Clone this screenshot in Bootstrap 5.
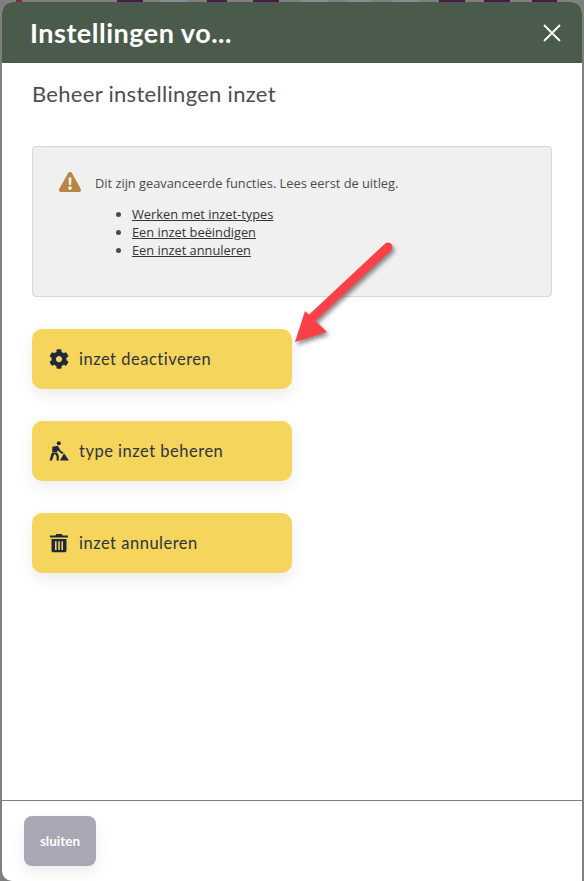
<!DOCTYPE html>
<html lang="nl">
<head>
  <meta charset="UTF-8">
  <meta name="viewport" content="width=device-width, initial-scale=1.0">
  <title>Instellingen</title>
  <link href="https://cdn.jsdelivr.net/npm/bootstrap@5.3.2/dist/css/bootstrap.min.css" rel="stylesheet">
  <style>
    html, body { height: 100%; }
    body {
      background-color: #7f7f7f;
      background-image: linear-gradient(90deg, transparent 16px, #8a2a2a 16px, #8a2a2a 22px, transparent 22px, transparent 117px, #4a1a4a 117px, #4a1a4a 143px, transparent 143px, transparent 160px, #7d8f92 160px, #7d8f92 188px, transparent 188px, transparent 207px, #4a1a4a 207px, #4a1a4a 227px, transparent 227px, transparent 253px, #4a1a4a 253px, #4a1a4a 279px, transparent 279px, transparent 300px, #7d8f92 300px, #7d8f92 328px, transparent 328px, transparent 346px, #7d8f92 346px, #7d8f92 372px, transparent 372px, transparent 393px, #7d8f92 393px, #7d8f92 419px, transparent 419px, transparent 439px, #4a1a4a 439px, #4a1a4a 465px, transparent 465px, transparent 484px, #4a1a4a 484px, #4a1a4a 510px, transparent 510px, transparent 532px, #4a1a4a 532px, #4a1a4a 557px, transparent 557px);
      background-size: 100% 2px;
      background-repeat: no-repeat;
      padding: 2px 2px 0;
      overflow: hidden;
    }
    .sheet { position: relative; height: 879px; background: #fff; border-radius: 10px 10px 0 10px; overflow: hidden; }
    .sheet-head { height: 61px; background: #4a5b4b; padding: 0 10px 0 28px; }
    .sheet-head h1 { font: 700 27px/1 "Lato", sans-serif; color: #fff; margin: 0; letter-spacing: .5px; }
    .sheet-close { width: 40px; height: 40px; padding: 0; background: none; border: 0; }
    .sheet-body { padding: 17px 30px 0; }
    .sheet-body h2 { font: 400 22px/28px "Lato", sans-serif; color: #4d4d4d; margin: 0 0 38px; letter-spacing: .3px; }
    .note-box { height: 151px; background: #f0f0f0; border: 1px solid #cfd9d6; border-radius: 4px; padding: 25px 25px; font: 400 12.8px/18px "Open Sans", sans-serif; color: #4a4a4a; margin-bottom: 32px; }
    .note-box p { margin: 0 0 11px; }
    .note-box ul { margin: 0; padding-left: 74px; }
    .note-box a { color: #333; }
    .warn-icon { width: 24px; height: 22px; margin-right: 13px; flex: none; position: relative; top: -1px; }
    .action-btn { width: 260px; height: 60px; background: #f6d55c; border: 0; border-radius: 10px; padding: 0 0 0 17px; margin-bottom: 32px; font: 400 16.5px/1 "Lato", sans-serif; color: #2f3440; letter-spacing: .5px; box-shadow: 0 6px 16px rgba(0,0,0,.08); }
    .action-btn svg { width: 20px; height: 20px; margin-right: 10px; flex: none; fill: #1e2a3c; }
    .sheet-foot { position: absolute; left: 0; right: 0; bottom: 0; height: 81px; border-top: 1px solid #7f7f7f; padding: 15px 22px; }
    .close-btn { width: 72px; height: 50px; background: #a9a6b6; border: 0; border-radius: 8px; color: #fff; font: 700 13.5px/1 "Lato", sans-serif; box-shadow: 0 6px 16px rgba(0,0,0,.08); padding: 1px 0 0; }
    .red-arrow { position: absolute; left: 280px; top: 228px; width: 120px; height: 120px; overflow: visible; }
  </style>
</head>
<body>
  <div class="sheet d-flex flex-column">
    <div class="sheet-head d-flex align-items-center justify-content-between">
      <h1>Instellingen vo...</h1>
      <button type="button" class="sheet-close d-flex align-items-center justify-content-center" aria-label="sluiten">
        <svg width="20" height="20" viewBox="0 0 20 20"><path d="M2 2l16 16M18 2L2 18" stroke="#fff" stroke-width="1.8" fill="none"/></svg>
      </button>
    </div>
    <div class="sheet-body">
      <h2>Beheer instellingen inzet</h2>
      <div class="note-box">
        <p class="d-flex align-items-center">
          <svg class="warn-icon" viewBox="0 0 24 22"><path fill="#b98545" d="M12 1c-.9 0-1.600.5-2 1.200L1.200 18c-.8 1.400.2 3 1.800 3h18c1.600 0 2.600-1.600 1.800-3L14 2.200C13.600 1.500 12.900 1 12 1z"/><path fill="#f0f0f0" d="M10.500 6.500h3l-.4 7.500h-2.200zM12 15.200a1.900 1.900 0 1 1 0 3.800 1.900 1.900 0 0 1 0-3.800z"/></svg>
          Dit zijn geavanceerde functies. Lees eerst de uitleg.
        </p>
        <ul>
          <li><a href="#">Werken met inzet-types</a></li>
          <li><a href="#">Een inzet beëindigen</a></li>
          <li><a href="#">Een inzet annuleren</a></li>
        </ul>
      </div>
      <button type="button" class="action-btn d-flex align-items-center">
        <svg viewBox="0 0 512 512"><path d="M487.400 315.700l-42.600-24.600c4.300-23.200 4.300-47 0-70.200l42.600-24.600c4.900-2.800 7.100-8.600 5.500-14-11.100-35.600-30-67.800-54.700-94.600-3.800-4.100-10-5.100-14.800-2.300L380.800 110c-17.900-15.400-38.500-27.300-60.800-35.100V25.800c0-5.600-3.900-10.500-9.400-11.700-36.700-8.200-74.300-7.800-109.200 0-5.500 1.200-9.400 6.100-9.400 11.700V75c-22.200 7.900-42.800 19.800-60.800 35.100L88.700 85.500c-4.900-2.800-11-1.900-14.800 2.300-24.700 26.700-43.600 58.900-54.700 94.600-1.700 5.400.6 11.200 5.500 14L67.300 221c-4.300 23.200-4.300 47 0 70.200l-42.600 24.600c-4.900 2.800-7.100 8.600-5.500 14 11.100 35.600 30 67.800 54.700 94.600 3.800 4.100 10 5.100 14.800 2.300l42.600-24.600c17.900 15.400 38.500 27.300 60.800 35.100v49.200c0 5.600 3.900 10.500 9.400 11.700 36.700 8.200 74.300 7.800 109.200 0 5.500-1.200 9.400-6.100 9.400-11.700v-49.200c22.200-7.900 42.800-19.800 60.800-35.100l42.600 24.600c4.900 2.800 11 1.900 14.800-2.300 24.700-26.700 43.600-58.900 54.700-94.600 1.500-5.500-.7-11.300-5.600-14.100zM256 336c-44.100 0-80-35.900-80-80s35.900-80 80-80 80 35.900 80 80-35.900 80-80 80z"/></svg>
        inzet deactiveren
      </button>
      <button type="button" class="action-btn d-flex align-items-center">
        <svg viewBox="0 0 20 20"><circle cx="9.800" cy="2.200" r="2"/><path d="M3.300 5.800L8.800 4.800 11.500 9.500 14.500 11.500 13.600 13 10.300 11 9 9.200 8 11H3.300z"/><path d="M.6 19.500L2.800 11.600H8.200L9.800 15V19.500H7.600V15.600L6.600 13.600H5L3 19.500z"/><path d="M11 19.500L13.800 14.600 15 12.300 20 19.500z"/></svg>
        type inzet beheren
      </button>
      <button type="button" class="action-btn d-flex align-items-center">
        <svg viewBox="0 0 20 20"><path fill-rule="evenodd" d="M7.200 1h5.600l.8 1.600H19v2H1v-2h5.400zM2.500 6h15v11.500c0 1-.8 1.800-1.800 1.800H4.300c-1 0-1.800-.8-1.800-1.800zM6 8.200v8.800h1.600V8.200zm3.200 0v8.800h1.600V8.200zm3.200 0v8.800H14V8.200z"/></svg>
        inzet annuleren
      </button>
    </div>
    <div class="sheet-foot">
      <button type="button" class="close-btn">sluiten</button>
    </div>
    <svg class="red-arrow" viewBox="0 0 120 120" aria-hidden="true">
      <g style="filter: drop-shadow(2px 3px 2px rgba(0,0,0,.45))">
        <path d="M106 17L30 88" stroke="#fb4147" stroke-width="9" stroke-linecap="round" fill="none"/>
        <path d="M23 81L13 112 45 102z" fill="#fb4147"/>
      </g>
    </svg>
  </div>
  <script src="https://cdn.jsdelivr.net/npm/bootstrap@5.3.2/dist/js/bootstrap.bundle.min.js"></script>
</body>
</html>
